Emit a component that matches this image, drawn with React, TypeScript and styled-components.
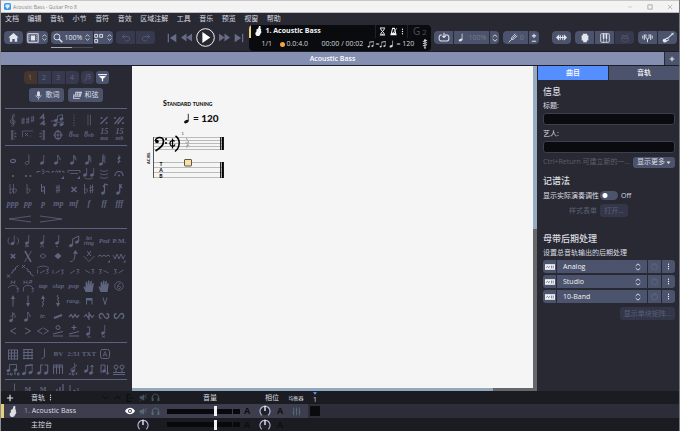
import React from "react";
import styled, { createGlobalStyle, css } from "styled-components";

const c = {
  base: "#282932",
  button: "#4c536d",
  disabled: "#373a4e",
  line: "#59627f",
  glyph: "#5f6480",
  text: "#dcdde3",
  black: "#0a0b0f",
};

const GlobalStyle = createGlobalStyle`
  * { box-sizing: border-box; }
  html, body, #root { height: 100%; }
  body {
    margin: 0;
    overflow: hidden;
    background: ${c.base};
    color: ${c.text};
    font-family: "Open Sans", "Noto Sans CJK SC", sans-serif;
    font-size: 7px;
    line-height: 10px;
  }
  button, input { font: inherit; color: inherit; }
  button { border: 0; padding: 0; background: none; display: flex; align-items: center; justify-content: center; }
  h2 { margin: 0; }
  svg { display: block; flex: none; }
`;

/* ---------- drawing helpers ---------- */

const Head = ({ x, y, open }: { x: number; y: number; open?: boolean }) => (
  <ellipse
    cx={x}
    cy={y}
    rx="1.9"
    ry="1.4"
    transform={`rotate(-22 ${x} ${y})`}
    fill={open ? "none" : "currentColor"}
    stroke="currentColor"
    strokeWidth={open ? 0.7 : 0.2}
  />
);
const Line = ({ d, w = 0.8, dash }: { d: string; w?: number; dash?: string }) => (
  <path d={d} fill="none" stroke="currentColor" strokeWidth={w} strokeDasharray={dash} />
);
const Solid = ({ d }: { d: string }) => <path d={d} fill="currentColor" />;
const Note = ({ x = 5, y = 11 }: { x?: number; y?: number }) => (
  <>
    <Head x={x} y={y} />
    <Line d={`M${x + 1.7} ${y - 0.5}V${y - 8}`} />
  </>
);
const Beamed = () => (
  <>
    <Head x={3} y={11.5} />
    <Head x={9.5} y={10.5} />
    <Line d="M4.7 11V3.5M11.2 10V2.5" />
    <Line d="M4.3 3.8L11.6 2.8" w={1.6} />
  </>
);
const Sharp = ({ x = 7, y = 7 }: { x?: number; y?: number }) => (
  <Line
    d={`M${x - 1} ${y - 4}v8.4M${x + 1} ${y - 4.5}v8.4M${x - 2.2} ${y - 1}l4.4-1.2M${x - 2.2} ${y + 2}l4.4-1.2`}
    w={0.8}
  />
);
const SmallSharp = ({ x, y }: { x: number; y: number }) => (
  <Line d={`M${x - 0.8} ${y - 3}v6.500M${x + 0.8} ${y - 3.5}v6.500M${x - 1.7} ${y - 0.8}l3.400-.7M${x - 1.7} ${y + 1.6}l3.400-.7`} w={0.7} />
);
const Flat = ({ x = 6 }: { x?: number }) => (
  <Line d={`M${x} 2v9.5c2-1 3.2-2.4 3-3.8c-.4-1.3-2-1-3 .1`} w={0.8} />
);
const Flag = ({ x = 6.7, y = 3, n = 1 }: { x?: number; y?: number; n?: number }) => (
  <>
    {Array.from({ length: n }, (_, i) => (
      <Line key={i} d={`M${x} ${y + i * 1.9}c.3 2 3 2 2.4 ${n > 1 ? 3.4 : 5}`} w={1} />
    ))}
  </>
);

const icons: Record<string, React.ReactNode> = {
  clef: (
    <Line d="M7.6 9.5c-1.8.4-2.3-2-.5-2.5c2-.3 2.9 3.3.3 3.8c-3.2.4-4.2-3-1.8-4.8C7.7 4.4 8.7 3.3 8 1.4C6.600 1 6.200 3 6.600 5l1.100 6.500c.1 1.600-1.600 1.900-2.200.8" />
  ),
  key: (
    <>
      <SmallSharp x={2} y={8} />
      <SmallSharp x={6.8} y={7.5} />
      <SmallSharp x={11.6} y={6} />
    </>
  ),
  time: (
    <>
      <Line d="M7.500 6.500V1.500L4.500 5H9" w={1.200} />
      <Line d="M8 12.500V8L5 11H9.500" w={1.200} />
    </>
  ),
  triplet: (
    <>
      <Line d="M0 8h3M6.500 3l5-1.500v4M6.500 3v4" />
      <Head x={5} y={7.500} />
      <Head x={10.500} y={6} />
      <Head x={4} y={12} />
      <Head x={10.500} y={11.500} />
      <Line d="M5.700 12V9.500l6.500-.7V11.500" />
    </>
  ),
  dashedBar: <Line d="M7 1.500V13" dash="1.300 1.300" />,
  doubleBar: <Line d="M6 1.500V12.500M8.500 1.500V12.500" w={0.700} />,
  simile: (
    <>
      <Line d="M3.500 11L10.500 4" w={1.300} />
      <circle cx="4.500" cy="5" r="1" fill="currentColor" />
      <circle cx="9.500" cy="10" r="1" fill="currentColor" />
    </>
  ),
  simile2: (
    <>
      <Line d="M2.500 11L8.500 4M5.500 11L11.500 4" w={1.300} />
      <circle cx="3" cy="5" r="1" fill="currentColor" />
      <circle cx="11" cy="10" r="1" fill="currentColor" />
    </>
  ),
  repeatOpen: (
    <>
      <Line d="M6 2V12" w={1.400} />
      <Line d="M8 2V12" w={0.500} />
      <circle cx="9.700" cy="5.500" r=".7" fill="currentColor" />
      <circle cx="9.700" cy="8.500" r=".7" fill="currentColor" />
    </>
  ),
  ending: (
    <>
      <Line d="M1.500 9V3H12" w={0.700} />
      <Line d="M4 5l3 3M7 5L4 8M9 8h.8" w={0.800} />
    </>
  ),
  repeatClose: (
    <>
      <Line d="M8 2V12" w={1.400} />
      <Line d="M6 2V12" w={0.500} />
      <circle cx="4.200" cy="5.500" r=".7" fill="currentColor" />
      <circle cx="4.200" cy="8.500" r=".7" fill="currentColor" />
    </>
  ),
  coda: (
    <>
      <ellipse cx="7" cy="7" rx="3.200" ry="3.900" fill="none" stroke="currentColor" strokeWidth="1.200" />
      <Line d="M7 1.500V12.500M2 7H12" />
    </>
  ),
  whole: <ellipse cx="7" cy="9" rx="2.500" ry="1.600" fill="none" stroke="currentColor" strokeWidth="1.100" />,
  half: (
    <>
      <Head x={6} y={11} open />
      <Line d="M7.900 10.500V2.500" />
    </>
  ),
  quarter: <Note x={6} />,
  eighth: (
    <>
      <Note />
      <Flag />
    </>
  ),
  thirtysecond: (
    <>
      <Note />
      <Flag n={3} />
    </>
  ),
  sixtyfourth: (
    <>
      <Note x={4} y={12} />
      <Flag x={5.700} y={2} n={4} />
    </>
  ),
  rest: <Solid d="M5.500 1.500l3.300 4l-1.600 2l1.600 2.500c-2-.5-2.500.6-1.400 2c-2.500-1.400-2-3.500-.2-3.300L5.300 6.500L7 4.500z" />,
  dot: <circle cx="7" cy="9" r="1" fill="currentColor" />,
  dots: (
    <>
      <circle cx="5" cy="9" r="1" fill="currentColor" />
      <circle cx="9.500" cy="9" r="1" fill="currentColor" />
    </>
  ),
  tuplet3: <Line d="M1 6V4.500H4.500M9.500 4.500H13V6M5.700 3c3-1 3 1.700 1 1.700c2.400 0 2 2.600-1 1.700" />,
  tupletN: (
    <>
      <Line d="M1 6V4.500H3M11 4.500H13V6" />
      <Line d="M4 5.500l1.500-2l1 2l1.500-2l1 2l1-2" />
      <Solid d="M13 9v3h-3z" />
    </>
  ),
  tupletBar: (
    <>
      <Line d="M1 6V3.500H13V6M3 6.500h8" />
      <Solid d="M13 9v3h-3z" />
    </>
  ),
  tie: (
    <>
      <Head x={3} y={8} />
      <Head x={10} y={8} />
      <Line d="M4.700 7.500V1M11.700 7.500V1M2.500 10.500c2 2 6.500 2 8.500 0" />
    </>
  ),
  ties: <Line d="M3 3c2 1.800 6 1.800 8 0M3 6.500c2 1.800 6 1.800 8 0M3 10c2 1.800 6 1.800 8 0" />,
  fermata: (
    <>
      <Line d="M3 9c0-6 8-6 8 0" w={1.100} />
      <circle cx="7" cy="8.500" r=".9" fill="currentColor" />
    </>
  ),
  flat2: (
    <>
      <Flat x={4} />
      <Flat x={7.500} />
    </>
  ),
  flat: <Flat />,
  natural: <Line d="M5.500 2V9.500L8.500 8.500M5.500 5.500L8.500 4.500V12" w={1} />,
  sharp: <Sharp />,
  sharp2: <Line d="M4.500 5l5 5M9.500 5l-5 5" w={1.600} />,
  flatSharp: (
    <>
      <Flat x={2.500} />
      <Sharp x={9.500} />
    </>
  ),
  octUp: (
    <>
      <Head x={6} y={11} />
      <Line d="M7.500 10.500V3M6 5l2-3l3 1" w={1.200} />
    </>
  ),
  octDown: (
    <>
      <Head x={6} y={11} />
      <Line d="M7.700 10.500V2M7.700 4L10 2.500M8 4l2 2" w={1.200} />
    </>
  ),
  ghost: (
    <>
      <Note x={6.500} y={9.500} />
      <Line d="M3.500 3.500c-2 2-2 5 0 7M11 3.500c2 2 2 5 0 7" />
    </>
  ),
  accent: (
    <>
      <Note x={6} y={9} />
      <Line d="M4 11l4 1l-4 1" w={0.700} />
    </>
  ),
  heavy: (
    <>
      <Note x={6} y={9} />
      <Line d="M4.500 13.500L6.300 11l1.700 2.500" />
    </>
  ),
  staccato: (
    <>
      <Note x={6} y={9} />
      <circle cx="6" cy="12.500" r=".8" fill="currentColor" />
    </>
  ),
  grace: (
    <>
      <Head x={4} y={11.500} />
      <Head x={10} y={8} />
      <Line d="M5.700 11V5L11.700 2V7.500" w={1} />
    </>
  ),
  xhead: <Line d="M4.800 5l4.400 4.400M9.200 5L4.800 9.400" w={1.500} />,
  bigx: (
    <>
      <Line d="M4 2l6 11" w={1.600} />
      <Line d="M10.500 2L3.500 13" />
    </>
  ),
  diamond: <Line d="M4 7l3-2.300L10 7L7 9.300z" w={0.900} />,
  diamondFull: <Solid d="M3.500 7L7 3.700L10.500 7L7 10.300z" />,
  bend: (
    <>
      <Line d="M3 12.500c4 0 5-3 5-9" w={1} />
      <Solid d="M8.500 1L11 5L6 4.500z" />
    </>
  ),
  tremBar: (
    <>
      <Line d="M1.500 7l5.500 5.500L12.500 7" />
      <Line d="M5 2l4 5M9 2L5 7" w={1} />
    </>
  ),
  vibrato: (
    <>
      <Line d="M1 7.500l2-1.500l2 1.500l2-1.500l2 1.500l2-1.500l2 1.500" w={1} />
      <Solid d="M13 11v2.500h-2.500z" />
    </>
  ),
  vibratoWide: (
    <>
      <Line d="M1 6l2 4l2-5l2 5l2-5l2 5l2-4" w={0.900} />
      <Solid d="M13.500 11v2.500H11z" />
    </>
  ),
  slideUp: <Line d="M1 13.500l3-3M1 10.500l3 3M5 9.500l2-1.500v-2l2.500-.5V3.500l3-2" w={1} />,
  slideDown: <Line d="M1 1l3 3M4 1L1 4M5 4.500l2 1v2l2.500.5V10l3 2" w={1} />,
  slideA: <Line d="M1 4c3-2.500 9-2.500 12 0M1.500 5.500v4M4 9l5-2.500M10 5.500h2.500l-1.500 2c2 0 2 2-.8 2" />,
  slideB: <Line d="M2 6v4M4.500 9l4.500-2.500M10 6h2.500l-1.500 2c2 0 2 2-.8 2" />,
  slideC: <Line d="M3 9.500L8 6.500M9.500 5.500h2.500l-1.500 2c2 0 2 2-.8 2" />,
  slideD: <Line d="M3 6l5 3M9.500 5.500h2.500l-1.500 2c2 0 2 2-.8 2" />,
  slideE: <Line d="M2 5.500h2.500L3 7.500c2 0 2 2-.8 2M6.500 6.500l5 2.500" />,
  slideF: <Line d="M2 5.500h2.500L3 7.500c2 0 2 2-.8 2M6.500 9l5-3" />,
  hammer: <Line d="M5.500 1.500L5 5M9 1.500L8.500 5M5.300 3.200h3.400M2 9c2-3.500 8-3.500 10 0M10.500 9.500h2l-1 1.500c1.500 0 1.500 2-.8 2" />,
  hammerPull: (
    <Line d="M3 1.500v3.500M6 1.500v3.500M3 3.200h3M8 5l1-3.500h2l-.5 2H9M2 9c2-3.500 8-3.500 10 0M2.500 9v3.500M10.500 9.500h2l-1 1.500c1.500 0 1.500 2-.8 2" />
  ),
  hand: (
    <Solid d="M3.500 13L1.500 8c.7-.8 1.500-.3 2 .8L3.700 3c.7-.6 1.200-.2 1.300.3l.4 3L6 1.800c.5-.6 1.300-.4 1.400.2l.2 4L8.600 2c.6-.5 1.300-.2 1.300.4l-.3 4.200l1.200-2.500c.7-.3 1.100.2 1 .8L10.500 13z" />
  ),
  six: (
    <>
      <circle cx="7" cy="7" r="4.300" fill="none" stroke="currentColor" strokeWidth=".8" />
      <Line d="M8.500 4.500C6 4.500 5.200 7 5.500 8.500c.4 1.500 3 1.500 3-.1c0-1.600-2-1.800-3-.3" />
    </>
  ),
  up: (
    <>
      <Line d="M7 12.500V3" w={1} />
      <Solid d="M7 1L9 5H5z" />
    </>
  ),
  down: (
    <>
      <Line d="M7 1.500V11" w={1} />
      <Solid d="M7 13L9 9H5z" />
    </>
  ),
  upWave: (
    <>
      <Line d="M7 13l-1-1.500l2-1.500l-2-1.500l2-1.500l-1-2" w={1} />
      <Solid d="M7 1L9 5H5z" />
    </>
  ),
  downWave: (
    <>
      <Line d="M7 1l-1 1.500l2 1.500l-2 1.500l2 1.500l-1 2" w={1} />
      <Solid d="M7 13L9 9H5z" />
    </>
  ),
  downbow: <Solid d="M4 4h6.500v6.500h-1V6.500H5v4H4z" />,
  upbow: <Line d="M5 3.500l2 7l2-7" w={1} />,
  ringNote: (
    <>
      <Note x={5} y={11.500} />
      <Flag y={3.500} />
      <Line d="M4 8l5-4" w={0.600} />
    </>
  ),
  tremolo: <Line d="M3 9l8-3" w={1.900} />,
  mordent: <Line d="M2 8l2-2.500l2 3l2-3l2 3l2-2.500" w={1.300} />,
  mordentLow: <Line d="M2 8l2-2.500l2 3l2-3l2 3l2-2.500M7 3v8" w={1.200} />,
  turn: <Line d="M4.500 9.500C1 9 2 4.500 4.500 4.500c2.500 0 2.500 5 5 5c2.500 0 3.500-4.500 0-5" w={1.300} />,
  turnInv: <Line d="M4.500 4.500C1 5 2 9.500 4.500 9.500c2.500 0 2.500-5 5-5c2.500 0 3.500 4.500 0 5" w={1.300} />,
  lt: <Line d="M10 4L4.500 7L10 10" w={1} />,
  gt: <Line d="M4 4l5.500 3L4 10" w={1} />,
  swell: <Line d="M6.500 4L1.500 7l5 3M7.500 4l5 3l-5 3" w={0.900} />,
  wahOpen: (
    <>
      <circle cx="7" cy="3.500" r="2" fill="none" stroke="currentColor" />
      <Line d="M2 10l10-2.500M2 12h10" w={1.200} />
    </>
  ),
  wahClose: <Line d="M7 1v5M4.500 3.500h5M2 10l10-2.500M2 12h10" w={1.200} />,
  sus: (
    <>
      <Head x={6} y={10} />
      <Line d="M7.700 9.500V3H5M5.500 13h3" w={1} />
    </>
  ),
  trap: (
    <>
      <Note x={6} y={9} />
      <Line d="M5 11.500l3 2M8 11.500l-3 2" />
    </>
  ),
  chordGrid: <Line d="M2 3H12M2.500 3V12.500M5.500 3V12.500M8.500 3V12.500M11.500 3V12.500M2 6H12M2 9H12M2 12H12" w={1} />,
  chordGrid2: <Line d="M2 2.500H12M3 2.500V12.500M7 2.500V12.500M11 2.500V12.500M2 5.500H12M2 8.500H12M2 11.500H12" w={1} />,
  slashNote: <Line d="M8.500 1.500V10l-3 2" w={0.900} />,
  boxA: (
    <>
      <rect x="2.500" y="2.500" width="9" height="9" rx="2" fill="none" stroke="currentColor" />
      <Line d="M5 9.500L7 4.500l2 5M5.700 8h2.600" />
    </>
  ),
  beam: <Beamed />,
  beamAuto: (
    <>
      <Line d="M3.500 8V2.500h7V7M1 13l1-2l1 2M4.500 11v2h1.500v-2M8 11h2M9 11v2M11.500 11h1.500v2h-1.500z" w={0.900} />
      <Head x={2.500} y={8.500} />
      <Head x={9.500} y={8} />
    </>
  ),
  beamBreak: (
    <>
      <Head x={3} y={11} />
      <Head x={10} y={11} />
      <Line d="M4.700 10.500V3H7M8.500 3h3.200v7.500" w={1.100} />
    </>
  ),
  beamFour: <Line d="M2.500 12V3h9v9M5.500 3v9M8.500 3v9M2.500 5h9" w={1} />,
  stemSlash: (
    <>
      <Note x={6} y={9} />
      <Line d="M3 8l7-5M2 13l1-2l1 2M5.500 11v2H7v-2M8.500 11h2M9.500 11v2" />
    </>
  ),
  stemUp: (
    <>
      <Head x={4} y={9} />
      <Line d="M5.700 8.500V3M10 11V3M8.500 5L10 3l1.500 2" w={1} />
      <Head x={9} y={11} />
    </>
  ),
  stemDown: (
    <>
      <Line d="M4 11V3h4v7M10.500 3v9M9 10.500l1.500 2L12 10.500" w={1} />
      <Head x={7} y={9} />
    </>
  ),
  concert: (
    <>
      <circle cx="4" cy="5" r="2" fill="none" stroke="currentColor" />
      <circle cx="10" cy="5" r="2" fill="none" stroke="currentColor" />
      <Line d="M1 10.500h12M4 7v3M10 7v3M1 12.500h12" w={1} />
    </>
  ),
  bars: <Line d="M3 11V9M6 11V7M9 11V5M12 11V2" w={1.200} />,
  stairs: <Line d="M3 3v8l5-3v3M11 6v5" w={1} />,
  /* toolbar */
  home: <Solid d="M7 1.200L13.500 7H11.700V12.500H8.500V9H5.500V12.500H2.300V7H.5z" />,
  screen: (
    <>
      <rect x="1" y="2" width="12" height="10" rx=".5" fill="none" stroke="currentColor" strokeWidth="1.200" />
      <Solid d="M4.500 4h5v6h-5z" />
      <Line d="M2.800 4v6M11.200 4v6" dash="1 1" />
    </>
  ),
  updown: <Line d="M3 5L7 1.500L11 5M3 9l4 3.500L11 9" w={1.500} />,
  search: (
    <>
      <circle cx="5.500" cy="5.500" r="4.200" fill="none" stroke="currentColor" strokeWidth="1.300" />
      <Line d="M8.500 8.500l4.500 4.500" w={2} />
    </>
  ),
  layout: <Line d="M1 2h4v4H1zM8 2h4v4H8zM1 9h4v4H1z" w={1.300} />,
  undo: <Line d="M5 2L2 5l3 3M2 5h7c4 0 4 6 0 6H6" w={1.200} />,
  redo: <Line d="M9 2l3 3l-3 3M12 5H5c-4 0-4 6 0 6h3" w={1.200} />,
  first: <Solid d="M1 1h1.800v12H1zM13 1v12L4 7z" />,
  last: <Solid d="M13 1h-1.800v12H13zM1 1v12l9-6z" />,
  rewind: <Solid d="M7 2v10L0 7zM14 2v10L7 7z" />,
  forward: <Solid d="M7 2v10L14 7zM0 2v10L7 7z" />,
  play: (
    <>
      <circle cx="7" cy="7" r="6.500" fill="none" stroke="currentColor" strokeWidth=".7" />
      <Solid d="M4.700 3L10.500 7L4.700 11z" />
    </>
  ),
  guitar: <Solid d="M8.500 0h2v4l1.200 1L11 6.500l1 2L9 13.500C6 15 2.500 13 3.500 9.500L5 7.500L4.700 5L7 4z" />,
  hourglass: <Line d="M3 1.500h8M3 12.500h8M4 2c0 4 6 6 6 10M10 2c0 4-6 6-6 10M5.500 11.500h3" w={1.500} />,
  metronome: (
    <>
      <Solid d="M5 1h4l3 12H2zM6.200 3L4.500 9h5L8 3z" />
      <Line d="M6 10L12 2" w={1.200} />
    </>
  ),
  dotsV: (
    <>
      <circle cx="7" cy="2.500" r="1.300" fill="currentColor" />
      <circle cx="7" cy="7" r="1.300" fill="currentColor" />
      <circle cx="7" cy="11.500" r="1.300" fill="currentColor" />
    </>
  ),
  headstock: (
    <>
      <Line d="M7 1v12M4 3.500l6-1.500M4 6.500l6-1.500M4 9.500l6-1.500M5.500 12.500h3" w={1.300} />
      <circle cx="7" cy="2" r="1.500" fill="currentColor" />
    </>
  ),
  loop: <Line d="M8 3.500h2.500c3 0 3 7 0 7h-7c-3 0-3-7 0-7h1M7 1v5M5 4.500L7 6.500l2-2" w={1.200} />,
  fork: <Line d="M1 13l4-4M5 9c-1-3 3-5 5-8M5 9c3 1 5-3 8-5M6.500 7.500L11.500 2.500" w={1.200} />,
  plusminus: <Line d="M7 1v6M4 4h6M4 11.500h6" w={1.500} />,
  arrows: (
    <>
      <Solid d="M0 7l4-4v8zM14 7l-4-4v8z" />
      <Line d="M3 7h8M5.500 4v6M8.500 4v6" w={1.300} />
    </>
  ),
  fretboard: (
    <>
      <Solid d="M4 1h6v2l1.500 1L11 10l-1.500 1v2h-5v-2L3 10L2.500 4L4 3z" />
      <Line d="M1.500 4.500h11M1.500 7h11M1.500 9.500h11" w={0.800} />
    </>
  ),
  piano: (
    <>
      <rect x="1" y="1" width="12" height="12" rx="1" fill="none" stroke="currentColor" strokeWidth="1.200" />
      <Line d="M5 1v12M9 1v12" w={0.800} />
      <Line d="M5 1v7M9 1v7" w={2.200} />
    </>
  ),
  drum: (
    <>
      <ellipse cx="7" cy="6" rx="4.500" ry="2" fill="none" stroke="currentColor" />
      <Line d="M2.500 6v5c2 2 7 2 9 0V6M2 2l5 4M12 1L8 5" />
    </>
  ),
  tuner: <Line d="M5 3v4c0 2.500 4 2.500 4 0V3M7 9v4M3 3v7M11 3v7M1 4.500v4M13 4.500v4" w={1.200} />,
  eguitar: (
    <>
      <Line d="M13.500 1L6 8" w={1.300} />
      <Line d="M11 1.500l2.500 2" w={0.900} />
      <Solid d="M7 6.500C5 6 4.500 8 2.500 8C.2 8.300 .3 12 3 12.300C5.500 12.500 5.500 10.500 7.500 10C8.800 9.700 8.800 8.800 7.800 8.500L5.500 10L4.500 9z" />
    </>
  ),
  plus: <Line d="M7 1.500v11M1.500 7h11" w={2.100} />,
  mic: (
    <>
      <rect x="4.800" y=".5" width="4.400" height="8.500" rx="2.200" fill="currentColor" />
      <Line d="M3 6c0 6 8 6 8 0M7 10.500v3" w={1} />
    </>
  ),
  chord: (
    <>
      <Solid d="M4 1h10l-2 8H2z" />
      <Line d="M1.500 5L.5 11.500h10" w={1.300} />
      <path d="M6 2L5 9M9 2L8 9M4 4h9M3 6.500h9" stroke={c.button} strokeWidth=".7" />
    </>
  ),
  voices: <Line d="M2 11h3V6l6-1v4H8M4 3l7-1M11 2v3" w={1} />,
  multivoice: (
    <>
      <Line d="M0 2.500h14" w={1.500} />
      <Solid d="M2.500 4.500h9L8 9v4H6V9z" />
      <Line d="M2 4l2 4M12 4l-2 4" w={1} />
    </>
  ),
  mute: (
    <>
      <Solid d="M1 5h3l4-3v10L4 9H1z" />
      <Line d="M1.500 13L12.500 1.500M10 5c1.500 1 1.500 3.500 0 4.500" w={1} />
    </>
  ),
  phones: (
    <>
      <Line d="M2 9V7c0-7 10-7 10 0v2" w={1.500} />
      <Solid d="M1 7.500h3v5H1zM10 7.500h3v5h-3z" />
    </>
  ),
  eye: (
    <>
      <Solid d="M0 7c4-6 10-6 14 0c-4 6-10 6-14 0" />
      <circle cx="7" cy="7" r="2.700" fill="#3d3e4d" />
      <circle cx="7" cy="7" r="1.500" fill="currentColor" />
    </>
  ),
  eq: <Line d="M2.500 1v12M7 1v12M11.500 1v12M1 9h3M5.500 4.500h3M10 8h3" w={1.200} />,
  chevDown: <Line d="M1.500 4.500L7 9.500l5.500-5" w={1.700} />,
  chevUp: <Line d="M1.500 9.500L7 4.500l5.500 5" w={1.700} />,
  panel: <Line d="M9 1H2v12h7M4 7h9" w={1.400} />,
  knob: (
    <>
      <circle cx="7" cy="7" r="5" fill="#202127" />
      <path d="M3 12C-1 7 2 1.500 7 1.500S15 7 11 12" fill="none" stroke="#aeb7dc" strokeWidth="1.300" />
      <path d="M7 1v6" stroke="#fff" strokeWidth="1.500" />
    </>
  ),
  amp: (
    <>
      <rect x="0" y="3" width="14" height="8" fill="currentColor" />
      <path d="M1.500 8l2-2l1.500 2l2-2M9 5v4M11.500 5v4" fill="none" stroke={c.button} />
    </>
  ),
  power: (
    <>
      <circle cx="7" cy="7.500" r="4.800" fill="none" stroke="currentColor" />
      <Line d="M7 1.500v5" />
    </>
  ),
  caret: <Solid d="M1 4h12L7 11z" />,
  minimize: <Line d="M2 7h10" />,
  maximize: <Line d="M2 2h10v10H2z" w={1.500} />,
  close: <Line d="M2 2l10 10M12 2L2 12" w={1.200} />,
  tempoNote: (
    <>
      <ellipse cx="5.500" cy="11" rx="3" ry="2" transform="rotate(-22 5.500 11)" fill="currentColor" />
      <Line d="M8 10.500V1" w={1.100} />
    </>
  ),
  sixteenth: (
    <>
      <Note />
      <Flag n={2} />
    </>
  ),
};

const Icon = ({ name, size = 14 }: { name: string; size?: number }) => (
  <svg width={size} height={size} viewBox="0 0 14 14" aria-hidden="true">
    {icons[name]}
  </svg>
);

/* ---------- window chrome ---------- */

const Window = styled.div`
  height: 100vh;
  display: flex;
  flex-direction: column;
  border-left: 1px solid #8b8b90;
  border-right: 1px solid #77787d;
`;
const TitleBar = styled.header`
  flex: none;
  height: 13px;
  display: flex;
  align-items: center;
  gap: 2px;
  padding: 0 6px 0 3px;
  background: #f3f3f3;
  border-top: 1px solid #c6c6c6;
  border-bottom: 1px solid #bcbcbe;
  color: #858585;
  font-size: 5px;
`;
const WindowButtons = styled.div`
  margin-left: auto;
  display: flex;
  gap: 14px;
  color: #888;
`;
const MenuBar = styled.nav`
  flex: none;
  width: 276px;
  max-width: 100%;
  margin-left: 4px;
  height: 11px;
  display: flex;
  justify-content: space-between;
  align-items: center;
`;

/* ---------- toolbar ---------- */

const Toolbar = styled.div`
  flex: none;
  height: 27px;
  display: flex;
  align-items: center;
  padding: 0 2px 0 3px;
`;
const Cluster = styled.div<{ $gap: number }>`
  display: flex;
  align-items: center;
  gap: ${(p) => p.$gap}px;
`;
const Spacer = styled.div<{ $grow: number }>`
  flex: ${(p) => p.$grow};
`;
const Group = styled.div`
  display: flex;
  gap: 1px;
  border-radius: 4px;
  overflow: hidden;
`;
const ToolButton = styled.button<{ $w: number; $off?: boolean }>`
  width: ${(p) => p.$w}px;
  height: 13px;
  gap: 2px;
  background: ${(p) => (p.$off ? c.disabled : c.button)};
  color: ${(p) => (p.$off ? "#5c6078" : "#e4e6ee")};
`;
const ZoomSlot = styled.div`
  position: relative;
`;
const ZoomTrack = styled.div`
  position: absolute;
  left: 0;
  top: 16px;
  width: 42px;
  height: 1px;
  background: linear-gradient(90deg, #a3a5b0 50%, #4a4b58 50%);
`;
const Faded = styled.span`
  color: #787a83;
`;
const Transport = styled.button<{ $main?: boolean }>`
  color: ${(p) => (p.$main ? "#fff" : "#666b87")};
`;
const Lcd = styled.section`
  width: 182px;
  height: 26px;
  border-radius: 4px;
  background: ${c.black};
  overflow: hidden;
`;
const LcdTop = styled.div`
  height: 13px;
  display: flex;
  align-items: center;
  color: #f4f4f4;
`;
const LcdMark = styled.span`
  width: 2px;
  height: 13px;
  background: #e8cf79;
  margin-right: 2px;
`;
const LcdTitle = styled.b`
  flex: 1;
  padding-left: 2px;
  font-size: 7px;
  font-weight: 700;
`;
const LcdTools = styled.div`
  display: flex;
  align-items: center;
  justify-content: space-between;
  width: 33px;
  height: 13px;
  padding: 0 1px 0 2px;
  border-left: 1px solid #20212a;
  border-right: 1px solid #20212a;
`;
const LcdNote = styled.span`
  width: 23px;
  display: flex;
  align-items: baseline;
  justify-content: center;
  gap: 2px;
  color: #4b4e60;
  font-size: 10px;

  small {
    font-size: 8px;
  }
`;
const LcdBottom = styled.div`
  height: 13px;
  display: grid;
  grid-template-columns: 19px 41px 46px 21px 32px 14px;
  align-items: center;
  padding: 0 0 0 12px;
  color: #d7d7da;
`;
const Inline = styled.span`
  display: flex;
  align-items: center;
  white-space: nowrap;
`;
const OrangeDot = styled.i`
  width: 5px;
  height: 5px;
  margin-right: 1px;
  border-radius: 50%;
  background: #f4a63c;
`;

/* ---------- document tabs ---------- */

const DocTabs = styled.div`
  flex: none;
  height: 15px;
  display: flex;
  border: solid #1c1d26;
  border-width: 1px 0;
`;
const DocTab = styled.button`
  && {
    flex: 1;
    background: #858fb1;
    color: #fff;
    font-weight: 600;
  }
`;
const AddTab = styled.button`
  && {
    width: 14px;
    margin-left: 1px;
    background: ${c.button};
    color: #fff;
  }
`;

/* ---------- palette ---------- */

const Main = styled.main`
  flex: 1;
  min-height: 0;
  display: flex;
`;
const Palette = styled.aside`
  flex: none;
  width: 131px;
  overflow: hidden;
  padding: 5px 5px 0 4px;
`;
const PaletteRow = styled.div<{ $gap: number; $below: number }>`
  display: flex;
  justify-content: center;
  gap: ${(p) => p.$gap}px;
  margin-bottom: ${(p) => p.$below}px;
`;
const Voice = styled.button<{ $on?: boolean; $bright?: boolean }>`
  width: 13px;
  height: 13px;
  background: ${(p) => (p.$on ? "#44352f" : p.$bright ? c.button : c.disabled)};
  color: ${(p) => (p.$on ? "#a0704c" : p.$bright ? "#fff" : "#62667f")};
  ${(p) => p.$bright && css`border-radius: 3px;`}
`;
const WideButton = styled.button`
  && {
    width: 35px;
    height: 14px;
    gap: 3px;
    border-radius: 3px;
    background: ${c.button};
  }
`;
const Section = styled.section<{ $top: number; $bottom: number }>`
  display: grid;
  grid-template-columns: repeat(8, 1fr);
  grid-auto-rows: 15px;
  padding: ${(p) => p.$top}px 0 ${(p) => p.$bottom}px;
  border-top: 1px solid ${c.line};
`;
const Tool = styled.button<{ $span?: number }>`
  && {
    grid-column: span ${(p) => p.$span || 1};
    min-width: 0;
    color: ${c.glyph};
    white-space: nowrap;
  }
`;
const Mark = styled.span<{ $upright?: boolean; $small?: boolean; $big?: boolean }>`
  font-family: "Liberation Serif", serif;
  font-style: ${(p) => (p.$upright ? "normal" : "italic")};
  font-weight: 700;
  font-size: ${(p) => (p.$small ? 6 : p.$big ? 8 : 7)}px;
  line-height: ${(p) => (p.$small ? 5 : 8)}px;
  white-space: pre-line;
  text-align: center;

  small {
    font-size: 6px;
    vertical-align: top;
  }
`;

const Stack = styled.span`
  display: flex;
  flex-direction: column;
  align-items: center;
`;

const t = (text: string, upright = false, small = false, big = false) => (
  <Mark $upright={upright} $small={small} $big={big}>
    {text}
  </Mark>
);
type Cell = string | { label: string; node: React.ReactNode; span?: number };
const word = (label: string, upright = false): Cell => ({ label, node: t(label, upright) });
const dynamic = (label: string): Cell => ({ label, node: t(label, false, false, true) });
const stacked = (label: string): Cell => ({ label, node: t(label.replace(" ", "\n"), false, true) });
const fifteen = (s: string): Cell => ({
  label: "15" + s,
  node: (
    <Stack>
      {t("15", false, false, true)}
      {t(s, false, true)}
    </Stack>
  ),
});
const octave = (n: string, s: string): Cell => ({
  label: n + s,
  node: (
    <Mark $big>
      {n}
      <small>{s}</small>
    </Mark>
  ),
});

const sections: { top: number; bottom: number; cells: Cell[] }[] = [
  {
    top: 3,
    bottom: 3,
    cells: [
      "clef", "key", "time", "triplet", "dashedBar", "doubleBar", "simile", "simile2",
      "repeatOpen", "ending", "repeatClose", "coda", octave("8", "va"), octave("8", "vb"), fifteen("ma"), fifteen("mb"),
    ],
  },
  {
    top: 5,
    bottom: 2,
    cells: [
      "whole", "half", "quarter", "eighth", "sixteenth", "thirtysecond", "sixtyfourth", "rest",
      "dot", "dots", "tuplet3", "tupletN", "tupletBar", "tie", "ties", "fermata",
      "flat2", "flat", "natural", "sharp", "sharp2", "flatSharp", "octUp", "octDown",
      dynamic("ppp"), dynamic("pp"), dynamic("p"), dynamic("mp"), dynamic("mf"), dynamic("f"), dynamic("ff"), dynamic("fff"),
      {
        label: "crescendo",
        span: 2,
        node: (
          <svg width="24" height="8" viewBox="0 0 24 8">
            <Line d="M23 1L1 4l22 3" />
          </svg>
        ),
      },
      {
        label: "decrescendo",
        span: 2,
        node: (
          <svg width="24" height="8" viewBox="0 0 24 8">
            <Line d="M1 1l22 3L1 7" />
          </svg>
        ),
      },
    ],
  },
  {
    top: 4,
    bottom: 4,
    cells: [
      "ghost", "accent", "heavy", "staccato", "grace", stacked("let ring"), word("Ped"), word("P.M.", true),
      "xhead", "bigx", "diamond", "diamondFull", "bend", "tremBar", "vibrato", "vibratoWide",
      "slideUp", "slideDown", "slideA", "slideB", "slideC", "slideD", "slideE", "slideF",
      "hammer", "hammerPull", word("tap"), word("slap"), word("pop"), "hand", "hand", "six",
      "up", "down", "upWave", "downWave", word("rasg."), "downbow", { label: "upbow", span: 2, node: null },
      "ringNote", "eighth", word("tr."), "tremolo", "mordent", "mordentLow", "turn", "turnInv",
      "lt", "gt", "swell", "wahOpen", "wahClose", "sus", "trap",
    ],
  },
  {
    top: 3,
    bottom: 3,
    cells: [
      "chordGrid", "chordGrid2", "slashNote", word("BV", true), word("2:51", true), word("TXT", true), { label: "section", span: 2, node: null },
      "beamAuto", "beam", "beamBreak", "beamFour", "stemSlash", "stemUp", "stemDown", "concert",
    ],
  },
  { top: 1, bottom: 0, cells: ["slashNote", word("M", true), word("M", true), "bars", "stairs"] },
];
const spanned: Record<string, string> = { upbow: "upbow", section: "boxA" };
const StartTool = styled(Tool)`
  && {
    justify-content: flex-start;
    padding-left: 1px;
  }
`;

const PaletteTool = ({ cell }: { cell: Cell }) => {
  if (typeof cell === "string")
    return (
      <Tool aria-label={cell}>
        <Icon name={cell} />
      </Tool>
    );
  if (spanned[cell.label])
    return (
      <StartTool $span={cell.span} aria-label={cell.label}>
        <Icon name={spanned[cell.label]} />
      </StartTool>
    );
  return (
    <Tool $span={cell.span} aria-label={cell.label}>
      {cell.node}
    </Tool>
  );
};

/* ---------- score ---------- */

const ScorePane = styled.section`
  flex: 1;
  min-width: 0;
  display: flex;
  flex-direction: column;
`;
const Page = styled.div`
  flex: 1;
  background: #f5f5f5;
  color: #111;
  padding: 32px 0 0 13px;
`;
const PageScroller = styled.div`
  flex: none;
  height: 3px;
  background: linear-gradient(90deg, #94a8bd 90%, #66676b 90%);
`;
const Tuning = styled.p`
  margin: 0 0 4px 18px;
  font-family: Lato, sans-serif;
  font-weight: 900;
  font-variant: small-caps;
  font-size: 7px;
  line-height: 10px;
`;
const Tempo = styled.p`
  margin: 0 0 6px 37px;
  display: flex;
  align-items: center;
  font-family: Lato, sans-serif;
  font-weight: 900;
  font-size: 10px;
  line-height: 12px;
`;
const Scroller = styled.div`
  flex: none;
  width: 4px;
  margin-right: 1px;
  background: linear-gradient(#94abc2 163px, #66676b 163px);
`;

const Score = () => (
  <svg width="80" height="50" viewBox="145 130 80 50">
    <g stroke="#a0a0a0" strokeWidth=".7">
      {[137.5, 140.5, 143.5, 146.5, 149.5, 162.5, 167.5, 172.5, 177.5].map((y) => (
        <path key={y} d={`M153 ${y}H223`} />
      ))}
    </g>
    <path d="M153.500 137V178" stroke="#555" strokeWidth="1" />
    <path d="M220.500 137V150M220.500 162V178" stroke="#222" strokeWidth="1" />
    <path d="M222.800 137V150M222.800 162V178" stroke="#000" strokeWidth="2.200" />
    <path d="M155.500 141c0-4.500 8-5 8 .5c0 4.500-4 7-8 9.500" fill="none" stroke="#000" strokeWidth="1.700" />
    <circle cx="157" cy="141.500" r="1.800" />
    <circle cx="166" cy="139" r="1" />
    <circle cx="166" cy="143" r="1" />
    <path d="M174.500 141.500c-1-2-5-1-4.500 2.500c.5 3 4 3 5 .5M172.500 138.500v10" fill="none" stroke="#000" strokeWidth="1.200" />
    <path d="M175.500 136c5 3 5 11-.5 15.500" fill="none" stroke="#000" strokeWidth="1.500" />
    <path d="M186 138l2.500 3.500l-1.500 2l1.500 2c-2-.4-2.400.8-1.200 2.500M185 143h4" fill="none" stroke="#aaa" strokeWidth="1.100" />
    <rect x="184.500" y="159.500" width="7" height="6.500" rx=".5" fill="#f6dfa8" stroke="#5f563f" />
    <g fontFamily="Lato, sans-serif" fontWeight="900" fill="#111">
      <text x="181.500" y="135" fontSize="4" fill="#777">1</text>
      <g fontSize="5" textAnchor="middle">
        <text x="161" y="166">T</text>
        <text x="161" y="172">A</text>
        <text x="161" y="178">B</text>
      </g>
      <text transform="translate(150 164) rotate(-90)" fontSize="4">AC.BS.</text>
    </g>
  </svg>
);

/* ---------- inspector ---------- */

const Inspector = styled.aside`
  flex: none;
  width: 141px;
`;
const Tabs = styled.div`
  display: flex;
  gap: 1px;
`;
const Tab = styled.button<{ $on?: boolean }>`
  flex: 1;
  height: 14px;
  background: ${(p) => (p.$on ? "#558fff" : c.button)};
  color: #fff;
  font-weight: 500;
`;
const Form = styled.div`
  padding: 5px 4px 0 5px;
`;
const Heading = styled.h2<{ $top?: number }>`
  margin-top: ${(p) => p.$top || 0}px;
  font-size: 9px;
  font-weight: 500;
  line-height: 14px;
`;
const Field = styled.label`
  display: block;
  padding-top: 2px;
`;
const TextBox = styled.input`
  display: block;
  width: 100%;
  height: 12px;
  margin: 2px 0 2px;
  padding: 0 3px;
  border: 1px solid #3c3f50;
  border-radius: 3px;
  background: ${c.black};
`;
const Row = styled.div<{ $h: number; $end?: boolean }>`
  display: flex;
  align-items: center;
  justify-content: ${(p) => (p.$end ? "flex-end" : "flex-start")};
  height: ${(p) => p.$h}px;
  gap: 3px;
`;
const Hint = styled.span`
  flex: 1;
  color: #5c5f6f;
  white-space: nowrap;
`;
const Action = styled.button<{ $w: number; $off?: boolean }>`
  width: ${(p) => p.$w}px;
  height: ${(p) => (p.$off ? 13 : 11)}px;
  border-radius: 3px;
  gap: 1px;
  background: ${(p) => (p.$off ? "#34374a" : c.button)};
  color: ${(p) => (p.$off ? "#5c6078" : c.text)};
  white-space: nowrap;
`;
const Caption = styled.label<{ $muted?: boolean }>`
  width: 54px;
  text-align: right;
  white-space: nowrap;
  color: ${(p) => (p.$muted ? "#5c6078" : c.text)};
`;
const Toggle = styled.input`
  appearance: none;
  width: 18px;
  height: 9px;
  margin: 0;
  border-radius: 5px;
  background: radial-gradient(circle at 5px 50%, #fff 2px, transparent 3px) ${c.button};
`;
const Effect = styled.div`
  display: grid;
  grid-template-columns: 13px 1fr 13px 13px;
  gap: 1px;
  height: 13px;
  margin-bottom: 2px;
  border-radius: 3px;
  overflow: hidden;
`;
const EffectCell = styled.button<{ $wide?: boolean; $faint?: boolean }>`
  && {
    background: ${c.button};
    color: ${(p) => (p.$faint ? "#5f7286" : "#f1f1f5")};
    ${(p) =>
      p.$wide &&
      css`
        justify-content: space-between;
        padding: 0 5px 0 6px;
      `}
  }
`;

/* ---------- mixer ---------- */

const Mixer = styled.section`
  flex: none;
  background: #1b1c22;
`;
const MixRow = styled.div<{ $on?: boolean }>`
  display: grid;
  grid-template-columns: 19px 75px 12px 12px 14px 12px 12px 79px 14px 22px 8px 24px 14px 1fr;
  align-items: center;
  justify-items: center;
  height: ${(p) => (p.$on ? 14 : 13)}px;
  padding-left: 4px;
  ${(p) =>
    p.$on &&
    css`
      background: linear-gradient(90deg, #3d3e4d 307px, #2c2d38 307px);
      box-shadow: inset 3px 0 #e8cf79;
    `}
`;
const TrackName = styled.div<{ $indent?: number }>`
  justify-self: start;
  display: flex;
  align-items: center;
  gap: 2px;
  padding-left: ${(p) => p.$indent || 0}px;
  white-space: nowrap;
`;
const TrackNumber = styled.span`
  color: #9697a3;
`;
const Tint = styled.span<{ $color: string }>`
  display: flex;
  color: ${(p) => p.$color};
`;
const Slider = styled.input`
  appearance: none;
  justify-self: end;
  width: 73px;
  height: 11px;
  margin: 0;
  background: linear-gradient(90deg, #08090c 65px, transparent 65px, transparent 66px, #08090c 66px) center / 100% 5px no-repeat;

  &::-webkit-slider-thumb {
    appearance: none;
    width: 3px;
    height: 10px;
    background: #f0f0f0;
  }
`;
const Auto = styled.b`
  color: #0d0e12;
  font-size: 9px;
`;
const Clip = styled.div`
  width: 10px;
  height: 10px;
  background: ${c.black};
`;
const SmallLabel = styled.span`
  font-size: 5px;
  white-space: nowrap;
`;
const Ruler = styled.div`
  display: flex;
  flex-direction: column;
  align-items: center;
  line-height: 9px;

  &::before {
    content: "";
    border: solid transparent;
    border-width: 3px 2px 0;
    border-top-color: #4d8af0;
  }
`;

const menus = ["文档", "编辑", "音轨", "小节", "音符", "音效", "区域注解", "工具", "音乐", "预览", "视窗", "帮助"];

export default function App() {
  return (
    <>
      <GlobalStyle />
      <Window>
        <TitleBar>
          <svg width="7" height="7" viewBox="0 0 14 14">
            <rect width="14" height="14" rx="3" fill="#3d9be9" />
            <path d="M3 3h8v4l-4 5l-4-5z" fill="#d9efff" />
          </svg>
          <span>Acoustic Bass - Guitar Pro 8</span>
          <WindowButtons>
            <button aria-label="最小化"><Icon name="minimize" size={6} /></button>
            <button aria-label="最大化"><Icon name="maximize" size={6} /></button>
            <button aria-label="关闭"><Icon name="close" size={6} /></button>
          </WindowButtons>
        </TitleBar>
        <MenuBar>
          {menus.map((m) => (
            <button key={m}>{m}</button>
          ))}
        </MenuBar>
        <Toolbar>
          <Cluster $gap={3}>
            <Group>
              <ToolButton $w={19} aria-label="主页"><Icon name="home" size={11} /></ToolButton>
            </Group>
            <Group>
              <ToolButton $w={22} aria-label="视图">
                <Icon name="screen" size={12} />
                <Icon name="updown" size={7} />
              </ToolButton>
            </Group>
            <ZoomSlot>
              <Group>
                <ToolButton $w={42}>
                  <Icon name="search" size={10} />
                  100%
                  <Icon name="updown" size={7} />
                </ToolButton>
                <ToolButton $w={19} aria-label="布局">
                  <Icon name="layout" size={10} />
                  <Icon name="updown" size={7} />
                </ToolButton>
              </Group>
              <ZoomTrack />
            </ZoomSlot>
            <Group>
              <ToolButton $w={19} $off aria-label="撤消"><Icon name="undo" size={10} /></ToolButton>
              <ToolButton $w={19} $off aria-label="重做"><Icon name="redo" size={10} /></ToolButton>
            </Group>
          </Cluster>
          <Spacer $grow={12} />
          <Cluster $gap={4}>
            <Transport aria-label="开头"><Icon name="first" size={10} /></Transport>
            <Transport aria-label="后退"><Icon name="rewind" size={11} /></Transport>
            <Transport $main aria-label="播放"><Icon name="play" size={19} /></Transport>
            <Transport aria-label="前进"><Icon name="forward" size={11} /></Transport>
            <Transport aria-label="结尾"><Icon name="last" size={10} /></Transport>
          </Cluster>
          <Spacer $grow={6} />
          <Lcd>
            <LcdTop>
              <LcdMark />
              <Icon name="guitar" size={10} />
              <LcdTitle>1. Acoustic Bass</LcdTitle>
              <LcdTools>
                <Icon name="hourglass" size={9} />
                <Icon name="metronome" size={9} />
                <Icon name="dotsV" size={7} />
              </LcdTools>
              <LcdNote>
                G <small>2</small>
              </LcdNote>
            </LcdTop>
            <LcdBottom>
              <span>1/1</span>
              <Inline><OrangeDot />0.0:4.0</Inline>
              <Inline>00:00 / 00:02</Inline>
              <Inline><Icon name="beam" size={8} />=<Icon name="beam" size={8} /></Inline>
              <Inline><Icon name="tempoNote" size={8} />= 120</Inline>
              <Icon name="headstock" size={10} />
            </LcdBottom>
          </Lcd>
          <Spacer $grow={3} />
          <Cluster $gap={4}>
            <Group>
              <ToolButton $w={19} aria-label="循环"><Icon name="loop" size={12} /></ToolButton>
              <ToolButton $w={35}><Icon name="tempoNote" size={9} /><Faded>100%</Faded></ToolButton>
              <ToolButton $w={9} aria-label="速度"><Icon name="updown" size={8} /></ToolButton>
            </Group>
            <Group>
              <ToolButton $w={25}><Icon name="fork" size={10} /><Faded>0</Faded></ToolButton>
              <ToolButton $w={10} aria-label="移调"><Icon name="plusminus" size={10} /></ToolButton>
            </Group>
          </Cluster>
          <Spacer $grow={13} />
          <Cluster $gap={4}>
            <Group>
              <ToolButton $w={19} aria-label="宽度"><Icon name="arrows" size={11} /></ToolButton>
            </Group>
            <Group>
              <ToolButton $w={19} aria-label="指板"><Icon name="fretboard" size={10} /></ToolButton>
              <ToolButton $w={19} aria-label="键盘"><Icon name="piano" size={10} /></ToolButton>
              <ToolButton $w={19} $off aria-label="鼓"><Icon name="drum" size={10} /></ToolButton>
            </Group>
            <Group>
              <ToolButton $w={19} aria-label="调音器"><Icon name="tuner" size={11} /></ToolButton>
              <ToolButton $w={19} aria-label="吉他"><Icon name="eguitar" size={12} /></ToolButton>
            </Group>
          </Cluster>
        </Toolbar>
        <DocTabs>
          <DocTab>Acoustic Bass</DocTab>
          <AddTab aria-label="新建"><Icon name="plus" size={6} /></AddTab>
        </DocTabs>
        <Main>
          <Palette>
            <PaletteRow $gap={2} $below={4}>
              <Group>
                {["1", "2", "3", "4"].map((v) => (
                  <Voice key={v} $on={v === "1"}>{v}</Voice>
                ))}
              </Group>
              <Group>
                <Voice aria-label="声部"><Icon name="voices" size={9} /></Voice>
              </Group>
              <Voice $bright aria-label="多声部"><Icon name="multivoice" size={9} /></Voice>
            </PaletteRow>
            <PaletteRow $gap={4} $below={6}>
              <WideButton><Icon name="mic" size={9} />歌词</WideButton>
              <WideButton><Icon name="chord" size={9} />和弦</WideButton>
            </PaletteRow>
            {sections.map((s, i) => (
              <Section key={i} $top={s.top} $bottom={s.bottom}>
                {s.cells.map((cell, k) => (
                  <PaletteTool key={k} cell={cell} />
                ))}
              </Section>
            ))}
          </Palette>
          <ScorePane>
            <Page>
              <Tuning>Standard tuning</Tuning>
              <Tempo><Icon name="tempoNote" size={11} />= 120</Tempo>
              <Score />
            </Page>
            <PageScroller />
          </ScorePane>
          <Scroller />
          <Inspector>
            <Tabs>
              <Tab $on>曲目</Tab>
              <Tab>音轨</Tab>
            </Tabs>
            <Form>
              <Heading>信息</Heading>
              <Field>
                标题:
                <TextBox />
              </Field>
              <Field>
                艺人:
                <TextBox />
              </Field>
              <Row $h={14}>
                <Hint>Ctrl+Return 可建立新的一…</Hint>
                <Action $w={43}>显示更多<Icon name="caret" size={5} /></Action>
              </Row>
              <Heading $top={5}>记谱法</Heading>
              <Row $h={15}>
                <Caption htmlFor="concert">显示实际演奏调性</Caption>
                <Toggle type="checkbox" id="concert" />
                <span>Off</span>
              </Row>
              <Row $h={15}>
                <Caption as="span" $muted>样式表单</Caption>
                <Action $w={28} $off>打开…</Action>
              </Row>
              <Heading $top={14}>母带后期处理</Heading>
              <Row $h={14}>设置总音轨输出的后期处理</Row>
              {["Analog", "Studio", "10-Band"].map((name) => (
                <Effect key={name}>
                  <EffectCell aria-label={`${name} 面板`}><Icon name="amp" size={10} /></EffectCell>
                  <EffectCell $wide>{name}<Icon name="updown" size={8} /></EffectCell>
                  <EffectCell $faint aria-label={`${name} 开关`}><Icon name="power" size={9} /></EffectCell>
                  <EffectCell aria-label={`${name} 菜单`}><Icon name="dotsV" size={7} /></EffectCell>
                </Effect>
              ))}
              <Row $h={17} $end>
                <Action $w={55} $off>显示单块矩阵…</Action>
              </Row>
            </Form>
          </Inspector>
        </Main>
        <Mixer>
          <MixRow>
            <TrackName $indent={1}><Icon name="plus" size={8} /></TrackName>
            <TrackName $indent={7}>音轨 <Icon name="dotsV" size={7} /></TrackName>
            <Tint $color="#08090c"><Icon name="chevDown" size={7} /></Tint>
            <Tint $color="#08090c"><Icon name="chevUp" size={7} /></Tint>
            <Tint $color="#08090c"><Icon name="panel" size={8} /></Tint>
            <Tint $color="#465663"><Icon name="mute" size={9} /></Tint>
            <Tint $color="#465663"><Icon name="phones" size={9} /></Tint>
            <TrackName $indent={42}>音量</TrackName>
            <span />
            <TrackName $indent={11}>相位</TrackName>
            <span />
            <SmallLabel>均衡器</SmallLabel>
            <Ruler>1</Ruler>
          </MixRow>
          <MixRow $on>
            <TrackName $indent={2}><Icon name="guitar" size={11} /></TrackName>
            <TrackName><TrackNumber>1.</TrackNumber>Acoustic Bass</TrackName>
            <span />
            <span />
            <Tint $color="#fff"><Icon name="eye" size={10} /></Tint>
            <Tint $color="#586c76"><Icon name="mute" size={9} /></Tint>
            <Tint $color="#586c76"><Icon name="phones" size={9} /></Tint>
            <Slider type="range" defaultValue={67} aria-label="音量" />
            <Auto>A</Auto>
            <Icon name="knob" size={12} />
            <Auto>A</Auto>
            <Tint $color="#5c7484"><Icon name="eq" size={9} /></Tint>
            <Clip />
          </MixRow>
          <MixRow>
            <span />
            <TrackName $indent={7}>主控台</TrackName>
            <span />
            <span />
            <span />
            <Icon name="knob" size={12} />
            <span />
            <Slider type="range" defaultValue={67} aria-label="主音量" />
            <Auto>A</Auto>
            <Icon name="knob" size={12} />
            <Auto>A</Auto>
          </MixRow>
        </Mixer>
      </Window>
    </>
  );
}
